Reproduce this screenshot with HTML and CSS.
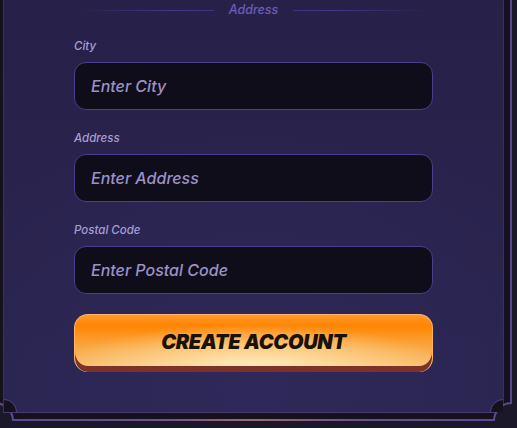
FILE: index.html
```html
<!DOCTYPE html>
<html>
<head>
  <meta charset="utf-8">
  <link rel="stylesheet" href="styles.css">
</head>
<body>
  <div class="frame">
    <div class="panel">
      <div class="section-title">
        <span class="section-line"></span>
        <span class="section-text">Address</span>
        <span class="section-line right"></span>
      </div>
      <form class="form">
        <div class="field">
          <label for="city">City</label>
          <input type="text" id="city" placeholder="Enter City">
        </div>
        <div class="field">
          <label for="address">Address</label>
          <input type="text" id="address" placeholder="Enter Address">
        </div>
        <div class="field">
          <label for="postal">Postal Code</label>
          <input type="text" id="postal" placeholder="Enter Postal Code">
        </div>
        <button type="button" class="create-btn">CREATE ACCOUNT</button>
      </form>
    </div>
  </div>
</body>
</html>
```

FILE: styles.css
```css
html, body {
  margin: 0;
  height: 100%;
  overflow: hidden;
}
body {
  background-color: #1b1829;
  font-family: Inter, "Noto Sans", sans-serif;
}
.frame {
  position: relative;
  width: 517px;
  box-sizing: border-box;
  margin: -49px 0 0 -5px;
  padding: 6px;
  border: 2px solid #4e3f92;
  border-image: linear-gradient(to right, #5a4795 0%, #6e5288 30%, #9c6b78 50%, #6e5288 70%, #5a4795 100%) 1;
  background-color: #15121e;
}
.frame:before,
.frame:after {
  content: "";
  position: absolute;
  bottom: -21px;
  width: 38px;
  height: 38px;
  box-sizing: border-box;
  border-radius: 50%;
  border: 2px solid #5d4894;
  background-color: #1b1829;
}
.frame:before {
  left: -21px;
  clip-path: inset(0 0 50% 50%);
}
.frame:after {
  right: -21px;
  clip-path: inset(0 50% 50% 0);
}
.panel {
  position: relative;
  border: 1px solid #3a3068;
  border-bottom-color: #4a3a70;
  padding: 40px 0 40px;
  background: radial-gradient(ellipse 70% 60% at 50% 95%, #2f2959 0%, rgba(47, 41, 89, 0) 100%), linear-gradient(to bottom, #272149, #2a2450);
}
.panel:before,
.panel:after {
  content: "";
  position: absolute;
  bottom: -13px;
  width: 26px;
  height: 26px;
  box-sizing: border-box;
  border-radius: 50%;
  border: 1px solid #56428e;
  background-color: #15121e;
  z-index: 1;
}
.panel:before {
  left: -13px;
  clip-path: inset(0 0 50% 50%);
}
.panel:after {
  right: -13px;
  clip-path: inset(0 50% 50% 0);
}
.section-title {
  display: flex;
  align-items: center;
  justify-content: center;
  gap: 15px;
  margin: 2px 0 0;
  height: 16px;
}
.section-line {
  width: 136px;
  height: 1px;
  background: linear-gradient(to right, rgba(74, 60, 140, 0), #43378a 70%, #3e3380);
}
.section-line.right {
  background: linear-gradient(to left, rgba(74, 60, 140, 0), #43378a 70%, #3e3380);
}
.section-text {
  font-size: 12.5px;
  font-style: italic;
  font-weight: 500;
  color: #6d5db8;
  line-height: 16px;
}
.form {
  width: 359px;
  margin: 20px auto 0;
  display: flex;
  flex-direction: column;
  gap: 20px;
}
.field {
  display: flex;
  flex-direction: column;
  gap: 8px;
}
.field label {
  font-size: 11.5px;
  line-height: 16px;
  font-style: italic;
  font-weight: 500;
  color: #a89ed6;
}
.field input {
  height: 48px;
  box-sizing: border-box;
  padding: 0 16px;
  border: 1px solid #4b3e8e;
  border-radius: 12px;
  background-color: #0f0d19;
  font-family: Inter, "Noto Sans", sans-serif;
  font-size: 16px;
  font-style: italic;
  font-weight: 500;
  color: #c8c0ea;
  outline: none;
}
.field input::placeholder {
  color: #9c92c8;
}
.create-btn {
  height: 58px;
  box-sizing: border-box;
  padding: 0 0 4px;
  border: 1px solid #ffb46a;
  border-bottom: none;
  border-radius: 14px;
  background: radial-gradient(ellipse 55% 75% at 50% 92%, #ffecbd 0%, rgba(255, 220, 150, 0) 100%), linear-gradient(to bottom, #ff9a2c 0%, #ff8503 18%, #f9aa46 60%, #f7c276 100%);
  box-shadow: inset 0 -6px 0 #7a3229;
  font-family: Inter, "Noto Sans", sans-serif;
  font-size: 20px;
  font-weight: 900;
  font-style: italic;
  letter-spacing: -0.3px;
  color: #1a1109;
  cursor: pointer;
}
```
